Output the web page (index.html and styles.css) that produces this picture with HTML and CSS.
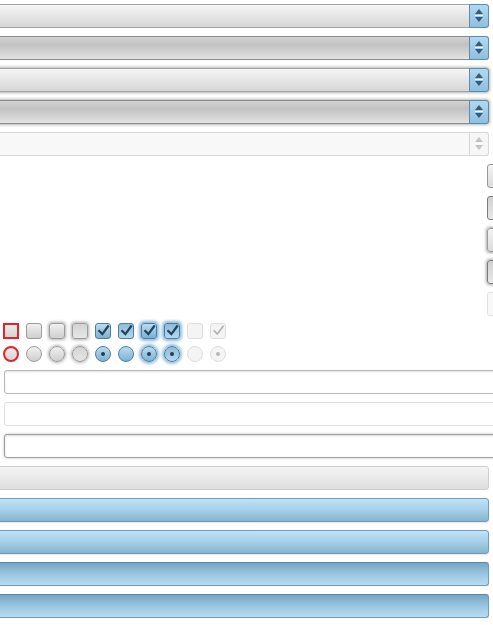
FILE: index.html
```html
<!DOCTYPE html>
<html>
<head>
<meta charset="utf-8">
<link rel="stylesheet" href="styles.css">
</head>
<body>
<div class="page">
  <div class="stack selects">
    <div class="select"><span class="arrow"></span></div>
    <div class="select sel-active"><span class="arrow"></span></div>
    <div class="select sel-focus"><span class="arrow"></span></div>
    <div class="select sel-active sel-focus"><span class="arrow"></span></div>
    <div class="select sel-disabled"><span class="arrow"></span></div>
  </div>
  <div class="stack buttons">
    <div class="btn"></div>
    <div class="btn btn-active"></div>
    <div class="btn btn-focus"></div>
    <div class="btn btn-active btn-focus"></div>
    <div class="btn btn-disabled"></div>
  </div>
  <div class="checks">
    <span class="cb cb-error"></span>
    <span class="cb"></span>
    <span class="cb glow"></span>
    <span class="cb glow dark"></span>
    <span class="cb on"><svg viewBox="0 0 16 16"><path d="M3.5 8.5 L6.8 11.8 L12.8 3.6" /></svg></span>
    <span class="cb on dark"><svg viewBox="0 0 16 16"><path d="M3.5 8.5 L6.8 11.8 L12.8 3.6" /></svg></span>
    <span class="cb on bglow"><svg viewBox="0 0 16 16"><path d="M3.5 8.5 L6.8 11.8 L12.8 3.6" /></svg></span>
    <span class="cb on bglow dark"><svg viewBox="0 0 16 16"><path d="M3.5 8.5 L6.8 11.8 L12.8 3.6" /></svg></span>
    <span class="cb dis"></span>
    <span class="cb dis"><svg class="grey" viewBox="0 0 16 16"><path d="M3.5 8.5 L6.8 11.8 L12.8 3.6" /></svg></span>
  </div>
  <div class="checks radios">
    <span class="rd rd-error"></span>
    <span class="rd"></span>
    <span class="rd glow"></span>
    <span class="rd glow dark"></span>
    <span class="rd on dot"></span>
    <span class="rd on"></span>
    <span class="rd on bglow dot"></span>
    <span class="rd on bglow dark dot"></span>
    <span class="rd dis"></span>
    <span class="rd dis gdot"></span>
  </div>
  <div class="stack inputs">
    <div class="input"></div>
    <div class="input in-disabled"></div>
    <div class="input in-focus"></div>
  </div>
  <div class="stack bars">
    <div class="bar bar-grey"></div>
    <div class="bar bar-blue"></div>
    <div class="bar bar-blue"></div>
    <div class="bar bar-pressed"></div>
    <div class="bar bar-pressed"></div>
  </div>
</div>
</body>
</html>
```

FILE: styles.css
```css
html, body {
  margin: 0;
  padding: 0;
  background: #ffffff;
  overflow: hidden;
  font-family: "Liberation Sans", Arial, sans-serif;
}
.page {
  width: 493px;
  height: 625px;
  padding-top: 4px;
  box-sizing: border-box;
  overflow: hidden;
  display: flex;
  flex-direction: column;
}
.stack {
  display: flex;
  flex-direction: column;
  gap: 8px;
}
/* selects */
.selects {
  margin-left: -20px;
  width: 509px;
}
.select {
  height: 24px;
  box-sizing: border-box;
  border: 1px solid #a3a3a3;
  border-radius: 3px;
  background: linear-gradient(#f6f6f6, #e2e2e2 60%, #d6d6d6);
  display: flex;
  justify-content: flex-end;
  position: relative;
}
.select .arrow {
  width: 20px;
  margin: -1px -1px -1px 0;
  box-sizing: border-box;
  border: 1px solid #5c8db0;
  border-radius: 0 3px 3px 0;
  background:
    linear-gradient(#ffffff, #ffffff) 5px 10px / 8px 1px no-repeat,
    linear-gradient(#b2d8ef, #8ec0df);
  position: relative;
}
.select .arrow::before,
.select .arrow::after {
  content: "";
  position: absolute;
  left: 5px;
  border-left: 4px solid transparent;
  border-right: 4px solid transparent;
}
.select .arrow::before {
  top: 4px;
  border-bottom: 5px solid #2e5e80;
}
.select .arrow::after {
  top: 12px;
  border-top: 5px solid #2e5e80;
}
.sel-active {
  border-color: #8a8a8a;
  background: linear-gradient(#d2d2d2, #c2c2c2 35%, #d8d8d8 80%, #e4e4e4);
}
.sel-focus {
  box-shadow: 0 0 3px 1px rgba(120, 120, 120, 0.55);
}
.sel-disabled {
  border-color: #dadada;
  background: #f8f8f8;
}
.sel-disabled .arrow {
  border-color: #d8d8d8;
  background:
    linear-gradient(#ffffff, #ffffff) 5px 10px / 8px 1px no-repeat,
    #f6f6f6;
}
.sel-disabled .arrow::before { border-bottom-color: #c4c4c4; }
.sel-disabled .arrow::after { border-top-color: #c4c4c4; }

/* small right buttons */
.buttons {
  margin-top: 8px;
  margin-left: 487px;
  width: 30px;
}
.btn {
  height: 24px;
  box-sizing: border-box;
  border: 1px solid #9a9a9a;
  border-radius: 3px;
  background: linear-gradient(#f4f4f4, #dcdcdc);
}
.btn-active {
  border-color: #7c7c7c;
  background: linear-gradient(#d0d0d0, #e8e8e8);
}
.btn-focus {
  box-shadow: 0 0 3px 1px rgba(110, 110, 110, 0.6);
}
.btn-disabled {
  border-color: #e0e0e0;
  background: #f8f8f8;
}

/* checkboxes and radios */
.checks {
  display: flex;
  gap: 7px;
  margin-top: 7px;
  padding-left: 3px;
  height: 16px;
}
.radios {
  margin-top: 7px;
}
.cb, .rd {
  width: 16px;
  height: 16px;
  box-sizing: border-box;
  border: 1px solid #9c9c9c;
  border-radius: 3px;
  background: linear-gradient(#f0f0f0, #cfcfcf);
  flex: none;
  position: relative;
}
.rd {
  border-radius: 50%;
}
.cb-error, .rd-error {
  border: 2px solid #e8202a;
  border-radius: 0;
  background: linear-gradient(#ececec, #d4d4d4);
}
.rd-error { border-radius: 50%; }
.glow {
  box-shadow: 0 0 3px 1px rgba(100, 100, 100, 0.5);
}
.dark {
  background: linear-gradient(#d4d4d4, #e6e6e6);
}
.on {
  border-color: #4f7e9e;
  background: linear-gradient(#b8dcf2, #7fb0cf);
}
.on.dark {
  background: linear-gradient(#8fbcd8, #b4d8ee);
}
.bglow {
  box-shadow: 0 0 3px 2px rgba(90, 160, 210, 0.7);
}
.dis {
  border-color: #dedede;
  background: #f4f4f4;
}
.cb svg {
  position: absolute;
  left: 0;
  top: -1px;
  width: 15px;
  height: 15px;
}
.cb svg path {
  fill: none;
  stroke: #1f4560;
  stroke-width: 2.4;
  stroke-linecap: square;
}
.cb svg.grey path {
  stroke: #b4b4b4;
  stroke-width: 1.8;
}
.dot::after, .gdot::after {
  content: "";
  position: absolute;
  left: 5px;
  top: 5px;
  width: 4px;
  height: 4px;
  border-radius: 50%;
  background: #1f3f55;
}
.gdot::after {
  background: #b8b8b8;
}

/* text inputs */
.inputs {
  margin-top: 8px;
  margin-left: 4px;
  width: 520px;
}
.input {
  height: 24px;
  box-sizing: border-box;
  border: 1px solid #b8b8b8;
  border-radius: 3px;
  background: #ffffff;
  box-shadow: inset 0 1px 2px rgba(0, 0, 0, 0.12);
}
.in-disabled {
  border-color: #e0e0e0;
  box-shadow: none;
}
.in-focus {
  border-color: #a0a0a0;
  box-shadow: inset 0 1px 2px rgba(0, 0, 0, 0.15), 0 0 3px rgba(0, 0, 0, 0.25);
}

/* bars */
.bars {
  margin-top: 8px;
  margin-left: -20px;
  width: 509px;
}
.bar {
  height: 24px;
  box-sizing: border-box;
  border-radius: 3px;
  border: 1px solid #cfcfcf;
}
.bar-grey {
  background: linear-gradient(#f4f4f4, #dedede);
}
.bar-blue {
  border-color: #6f9cb8;
  background: linear-gradient(#bfe2f6, #a6cfe6 50%, #86b4cf);
  box-shadow: 0 1px 1px rgba(0, 0, 0, 0.1);
}
.bar-pressed {
  border-color: #6f9cb8;
  border-top-color: #5b88a3;
  background: linear-gradient(#76a6c2, #9dc8e2 55%, #b8dcf1);
}
```
